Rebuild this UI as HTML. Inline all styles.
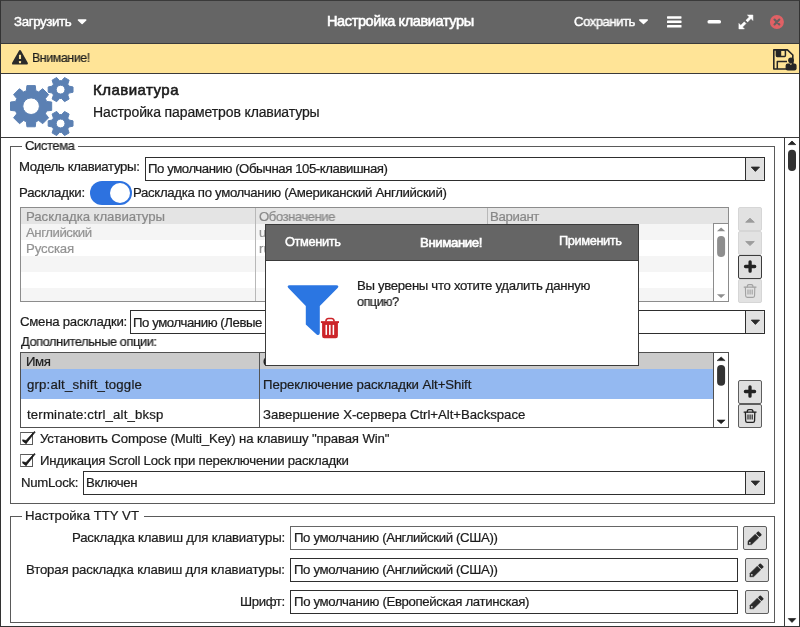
<!DOCTYPE html>
<html><head><meta charset="utf-8">
<style>
*{box-sizing:border-box;margin:0;padding:0}
html,body{width:800px;height:627px;overflow:hidden;background:#fff}
body{font-family:"Liberation Sans",sans-serif;font-size:13px;color:#1c1c1c;position:relative}
.abs{position:absolute}
.t{will-change:transform;position:absolute;white-space:nowrap;line-height:1;transform-origin:0 50%}
.ln{position:absolute;background:#3a3a3a}
.box{position:absolute;border:1px solid #2e2e2e;background:#fff}
.fs{position:absolute;border:1px solid #5a5a5a}
.btn{position:absolute;border:1px solid #5e5e5e;border-radius:2px;background:#dfdfdf}
.btn.dis{border-color:#d6d6d6;background:#e2e2e2}
.dd{position:absolute;border-left:1px solid #2e2e2e;background:#e1e1e1;border-radius:0 2px 2px 0}
svg{position:absolute;overflow:visible}
</style></head><body>

<!-- ===== header ===== -->
<div class="abs" style="left:0;top:0;width:800px;height:43px;background:#656565"></div>
<div class="ln" style="left:0;top:43px;width:800px;height:1px"></div>
<div class="abs" style="left:0;top:44px;width:800px;height:29px;background:#ffe497"></div>
<div class="ln" style="left:0;top:73px;width:800px;height:1px"></div>
<div class="ln" style="left:0;top:137px;width:800px;height:1px"></div>
<div class="t" style="left:14px;top:14.74px;font-size:13.3px;-webkit-text-stroke:0.45px #ffffff;color:#ffffff;letter-spacing:-0.380px;">Загрузить</div>
<div class="t" style="left:327px;top:13.73px;font-size:14.5px;-webkit-text-stroke:0.6px #ffffff;color:#ffffff;letter-spacing:-0.381px;">Настройка клавиатуры</div>
<div class="t" style="left:574.4px;top:14.74px;font-size:13.3px;-webkit-text-stroke:0.45px #ffffff;color:#ffffff;letter-spacing:-0.450px;transform:scaleX(0.9818);">Сохранить</div>
<svg style="left:0;top:0" width="800" height="74" viewBox="0 0 800 74">
  <!-- dropdown arrows -->
  <path d="M78.4 19.9 L85.8 19.9 L82.1 23.6 Z" fill="#fff" stroke="#fff" stroke-width="1.4" stroke-linejoin="round"/>
  <path d="M639.7 19.9 L647.3 19.9 L643.5 23.6 Z" fill="#fff" stroke="#fff" stroke-width="1.4" stroke-linejoin="round"/>
  <!-- hamburger -->
  <g fill="#fff"><rect x="667" y="16.2" width="14.5" height="2.5" rx=".6"/><rect x="667" y="20.6" width="14.5" height="2.5" rx=".6"/><rect x="667" y="25" width="14.5" height="2.5" rx=".6"/></g>
  <!-- minimize -->
  <rect x="707.5" y="20" width="13.5" height="3.6" rx="1.6" fill="#fff"/>
  <!-- maximize -->
  <g fill="#fff" stroke="#fff" stroke-width=".5" stroke-linejoin="round">
    <path d="M747.4 15 L752.9 15 L752.9 20.5 L751 18.6 L747.4 22.2 L745.7 20.5 L749.3 16.9 Z"/>
    <path d="M738.9 28.9 L738.9 23.4 L740.8 25.3 L744.3 21.8 L746 23.5 L742.5 27 L744.4 28.9 Z"/>
  </g>
  <path d="M744.6 20.2 L747.6 23.2" stroke="#656565" stroke-width="1.1"/>
  <!-- close -->
  <circle cx="776.9" cy="22" r="7" fill="#e06165"/>
  <path d="M774.5 19.6 L779.3 24.4 M779.3 19.6 L774.5 24.4" stroke="#646060" stroke-width="2.1" stroke-linecap="round"/>
  <!-- warning triangle -->
  <path d="M20 51.3 L26.7 63.4 L13.2 63.4 Z" fill="#2b2b2b" stroke="#2b2b2b" stroke-width="2.4" stroke-linejoin="round"/>
  <rect x="18.95" y="54.7" width="2.1" height="4.4" rx=".4" fill="#ffe497"/>
  <rect x="18.95" y="61" width="2.1" height="2.2" rx=".4" fill="#ffe497"/>
  <!-- save-as-user icon -->
  <path d="M773.8 49.9 H787.4 L792.8 55 V69 H773.8 Z" fill="none" stroke="#262626" stroke-width="1.6" stroke-linejoin="round"/>
  <rect x="776.4" y="50" width="9" height="6.4" rx=".8" fill="none" stroke="#262626" stroke-width="1.5"/>
  <rect x="776.4" y="50" width="4.8" height="6.4" fill="#262626"/>
  <path d="M777.3 69 V61.4 H787" fill="none" stroke="#262626" stroke-width="1.5" stroke-linejoin="round"/>
  <circle cx="791" cy="60.3" r="2.85" fill="#262626"/>
  <rect x="785.6" y="63.6" width="11" height="6.9" rx="2.2" fill="#262626"/>
  <rect x="790" y="64" width="1.6" height=".8" fill="#c9b47d"/>
</svg>
<svg class="abs" style="left:0;top:0" width="90" height="140" viewBox="0 0 90 140"><g fill="#5b80b3" fill-rule="evenodd" stroke="#5b80b3" stroke-width="1" stroke-linejoin="round"><path d="M46.59 101.46 L51.68 102.01 L51.68 110.39 L46.59 110.94 L45.40 113.81 L48.61 117.79 L42.69 123.71 L38.71 120.50 L35.84 121.69 L35.29 126.78 L26.91 126.78 L26.36 121.69 L23.49 120.50 L19.51 123.71 L13.59 117.79 L16.80 113.81 L15.61 110.94 L10.52 110.39 L10.52 102.01 L15.61 101.46 L16.80 98.59 L13.59 94.61 L19.51 88.69 L23.49 91.90 L26.36 90.71 L26.91 85.62 L35.29 85.62 L35.84 90.71 L38.71 91.90 L42.69 88.69 L48.61 94.61 L45.40 98.59 Z M22.80 106.20 a8.30 8.30 0 1 0 16.60 0 a8.30 8.30 0 1 0 -16.60 0 Z"/><path d="M68.88 86.08 L73.02 86.96 L73.02 92.24 L68.88 93.12 L67.79 95.02 L69.10 99.04 L64.52 101.68 L61.70 98.53 L59.50 98.53 L56.68 101.68 L52.10 99.04 L53.41 95.02 L52.32 93.12 L48.18 92.24 L48.18 86.96 L52.32 86.08 L53.41 84.18 L52.10 80.16 L56.68 77.52 L59.50 80.67 L61.70 80.67 L64.52 77.52 L69.10 80.16 L67.79 84.18 Z M56.20 89.60 a4.40 4.40 0 1 0 8.80 0 a4.40 4.40 0 1 0 -8.80 0 Z"/><path d="M68.88 119.98 L73.02 120.86 L73.02 126.14 L68.88 127.02 L67.79 128.92 L69.10 132.94 L64.52 135.58 L61.70 132.43 L59.50 132.43 L56.68 135.58 L52.10 132.94 L53.41 128.92 L52.32 127.02 L48.18 126.14 L48.18 120.86 L52.32 119.98 L53.41 118.08 L52.10 114.06 L56.68 111.42 L59.50 114.57 L61.70 114.57 L64.52 111.42 L69.10 114.06 L67.79 118.08 Z M56.20 123.50 a4.40 4.40 0 1 0 8.80 0 a4.40 4.40 0 1 0 -8.80 0 Z"/></g></svg>

<!-- ===== main scroll ===== -->
<div class="ln" style="left:784px;top:138px;width:1px;height:489px"></div>
<svg style="left:785px;top:138px" width="14" height="489" viewBox="785 138 14 489">
  <path d="M788.3 144.6 L795.7 144.6 L792 141 Z" fill="#222" stroke="#222" stroke-width=".8" stroke-linejoin="round"/>
  <rect x="788" y="149.8" width="8" height="21.2" rx="4" fill="#333"/>
  <path d="M788.3 618.6 L795.7 618.6 L792 622.4 Z" fill="#222" stroke="#222" stroke-width=".8" stroke-linejoin="round"/>
</svg>

<!-- ===== fieldset 1 ===== -->
<div class="fs" style="left:10px;top:146px;width:765px;height:358px"></div>
<!-- select 1 -->
<div class="box" style="left:145px;top:157px;width:620px;height:24px"></div>
<div class="dd" style="left:745px;top:158px;width:19px;height:22px"></div>
<!-- toggle -->
<div class="abs" style="left:90px;top:181px;width:42px;height:24px;border-radius:12px;background:#2d72e0"></div>
<div class="abs" style="left:109.8px;top:183px;width:20.4px;height:20.4px;border-radius:10.2px;background:#fff"></div>
<!-- table 1 -->
<div class="abs" style="left:20px;top:207px;width:709px;height:95px;border:1px solid #8c8c8c;background:#fff"></div>
<div class="abs" style="left:21px;top:208px;width:707px;height:16px;background:#e4e4e4"></div>
<div class="abs" style="left:21px;top:224px;width:692px;height:16px;background:#f5f5f5"></div>
<div class="abs" style="left:21px;top:256px;width:692px;height:16px;background:#f5f5f5"></div>
<div class="abs" style="left:21px;top:288px;width:692px;height:13px;background:#f5f5f5"></div>
<div class="abs" style="left:255px;top:208px;width:1px;height:93px;background:#b8b8b8"></div>
<div class="abs" style="left:487px;top:208px;width:1px;height:93px;background:#b8b8b8"></div>
<div class="abs" style="left:713px;top:223px;width:15px;height:78px;background:#fff;border-left:1px solid #8c8c8c;border-top:1px solid #8c8c8c"></div>
<svg style="left:713px;top:223px" width="16" height="79" viewBox="713 223 16 79">
  <path d="M716.9 231.2 L725.3 231.2 L721.1 227.4 Z" fill="#8e8e8e"/>
  <rect x="717.1" y="236" width="8" height="21" rx="4" fill="#8e8e8e"/>
  <path d="M716.9 294.2 L725.3 294.2 L721.1 298 Z" fill="#8e8e8e"/>
</svg>
<!-- side buttons 1 -->
<div class="btn dis" style="left:738px;top:207px;width:24px;height:24px"></div>
<div class="btn dis" style="left:738px;top:231px;width:24px;height:24px"></div>
<div class="btn" style="left:738px;top:255px;width:24px;height:24px;border-color:#3c3c3c"></div>
<div class="btn dis" style="left:738px;top:279px;width:24px;height:24px"></div>
<!-- select 2 -->
<div class="box" style="left:130px;top:310px;width:635px;height:24px"></div>
<div class="dd" style="left:745px;top:311px;width:19px;height:22px"></div>
<!-- table 2 -->
<div class="abs" style="left:20px;top:352px;width:709px;height:76px;border:1px solid #505050;background:#fff"></div>
<div class="abs" style="left:21px;top:353px;width:692px;height:16px;background:#cbcbcb"></div>
<div class="abs" style="left:21px;top:369px;width:692px;height:30px;background:#94b9f1"></div>
<div class="abs" style="left:259px;top:353px;width:1px;height:74px;background:#555"></div>
<div class="abs" style="left:713px;top:353px;width:1px;height:74px;background:#505050"></div>
<svg style="left:713px;top:352px" width="16" height="76" viewBox="713 352 16 76">
  <path d="M717.1 360.6 L725.1 360.6 L721.1 356.9 Z" fill="#222" stroke="#222" stroke-width=".6" stroke-linejoin="round"/>
  <rect x="717.1" y="365" width="8" height="20.8" rx="4" fill="#333"/>
  <path d="M717.1 420 L725.1 420 L721.1 423.7 Z" fill="#222" stroke="#222" stroke-width=".6" stroke-linejoin="round"/>
</svg>
<!-- side buttons 2 -->
<div class="btn" style="left:738px;top:380px;width:24px;height:24px"></div>
<div class="btn" style="left:738px;top:404px;width:24px;height:24px"></div>
<!-- checkboxes -->
<div class="abs" style="left:20px;top:432px;width:13px;height:13px;border:1px solid #5a5a5a;border-left-color:#808080;background:#fff"></div>
<div class="abs" style="left:20px;top:454px;width:13px;height:13px;border:1px solid #5a5a5a;border-left-color:#808080;background:#fff"></div>
<!-- select 3 -->
<div class="box" style="left:83px;top:471px;width:682px;height:24px"></div>
<div class="dd" style="left:745px;top:472px;width:19px;height:22px"></div>

<!-- ===== fieldset 2 ===== -->
<div class="fs" style="left:10px;top:516px;width:765px;height:107px"></div>
<div class="box" style="left:290px;top:526px;width:448px;height:24px;border-color:#666"></div>
<div class="box" style="left:290px;top:558px;width:448px;height:24px"></div>
<div class="box" style="left:290px;top:590px;width:448px;height:24px"></div>
<div class="btn" style="left:743px;top:526px;width:24px;height:24px"></div>
<div class="btn" style="left:745px;top:558px;width:24px;height:24px"></div>
<div class="btn" style="left:745px;top:590px;width:24px;height:24px"></div>

<!-- icons in body -->
<svg style="left:0;top:0" width="800" height="627" viewBox="0 0 800 627">
<path d="M751.30 167.10 L759.50 167.10 L755.40 171.40 Z" fill="#2a2a2a" stroke="#2a2a2a" stroke-width=".9" stroke-linejoin="round"/><path d="M751.30 320.10 L759.50 320.10 L755.40 324.40 Z" fill="#2a2a2a" stroke="#2a2a2a" stroke-width=".9" stroke-linejoin="round"/><path d="M751.30 481.10 L759.50 481.10 L755.40 485.40 Z" fill="#2a2a2a" stroke="#2a2a2a" stroke-width=".9" stroke-linejoin="round"/><path d="M745.70 222.20 L754.30 222.20 L750.00 218.20 Z" fill="#9c9c9c" stroke="#9c9c9c" stroke-width=".9" stroke-linejoin="round"/><path d="M745.70 241.50 L754.30 241.50 L750.00 245.50 Z" fill="#9c9c9c" stroke="#9c9c9c" stroke-width=".9" stroke-linejoin="round"/><path d="M745.50 266.50 H754.70 M750.10 261.80 V271.20" stroke="#222" stroke-width="3.3" stroke-linecap="round" fill="none"/><g fill="none" stroke="#a2a2a2" stroke-width="1.1" stroke-linecap="round" stroke-linejoin="round"><path d="M744.10 287.10 H756.10"/><path d="M747.20 287.10 Q747.20 284.60 748.80 284.60 H751.40 Q753.00 284.60 753.00 287.10"/><path d="M745.40 287.30 L745.65 295.80 Q745.70 297.40 747.20 297.40 H753.00 Q754.50 297.40 754.55 295.80 L754.80 287.30"/></g><g stroke="#a2a2a2" stroke-width="1.15" stroke-linecap="butt"><path d="M748.00 289.60 V294.60"/><path d="M750.10 289.60 V294.60"/><path d="M752.20 289.60 V294.60"/></g><path d="M745.40 391.50 H754.60 M750.00 386.80 V396.20" stroke="#222" stroke-width="3.3" stroke-linecap="round" fill="none"/><g fill="none" stroke="#222" stroke-width="1.3" stroke-linecap="round" stroke-linejoin="round"><path d="M744.10 412.10 H756.10"/><path d="M747.20 412.10 Q747.20 409.60 748.80 409.60 H751.40 Q753.00 409.60 753.00 412.10"/><path d="M745.40 412.30 L745.65 420.80 Q745.70 422.40 747.20 422.40 H753.00 Q754.50 422.40 754.55 420.80 L754.80 412.30"/></g><g stroke="#222" stroke-width="1.15" stroke-linecap="butt"><path d="M748.00 414.60 V419.60"/><path d="M750.10 414.60 V419.60"/><path d="M752.20 414.60 V419.60"/></g><g transform="translate(747.90 544.70) rotate(-44)"><path d="M0 0 L2.7 -2.5 L12.6 -2.5 L12.6 2.5 L2.7 2.5 Z" fill="#2a2a2a" stroke="#2a2a2a" stroke-width=".5" stroke-linejoin="round"/><rect x="13.6" y="-2.6" width="3.4" height="5.2" rx=".9" fill="#2a2a2a"/><circle cx="2.7" cy="0" r=".85" fill="#e1e1e1"/></g><g transform="translate(749.90 576.80) rotate(-44)"><path d="M0 0 L2.7 -2.5 L12.6 -2.5 L12.6 2.5 L2.7 2.5 Z" fill="#2a2a2a" stroke="#2a2a2a" stroke-width=".5" stroke-linejoin="round"/><rect x="13.6" y="-2.6" width="3.4" height="5.2" rx=".9" fill="#2a2a2a"/><circle cx="2.7" cy="0" r=".85" fill="#e1e1e1"/></g><g transform="translate(749.90 608.80) rotate(-44)"><path d="M0 0 L2.7 -2.5 L12.6 -2.5 L12.6 2.5 L2.7 2.5 Z" fill="#2a2a2a" stroke="#2a2a2a" stroke-width=".5" stroke-linejoin="round"/><rect x="13.6" y="-2.6" width="3.4" height="5.2" rx=".9" fill="#2a2a2a"/><circle cx="2.7" cy="0" r=".85" fill="#e1e1e1"/></g><path d="M22.60 439.90 L26.20 443.40 L35.20 432.10 L34.20 431.60 L26.00 440.50 Z" fill="#1a1a1a" stroke="#1a1a1a" stroke-width=".7" stroke-linejoin="round"/><path d="M23.30 440.70 L26.00 442.70" stroke="#1a1a1a" stroke-width="2" stroke-linecap="round"/><path d="M22.60 461.90 L26.20 465.40 L35.20 454.10 L34.20 453.60 L26.00 462.50 Z" fill="#1a1a1a" stroke="#1a1a1a" stroke-width=".7" stroke-linejoin="round"/><path d="M23.30 462.70 L26.00 464.70" stroke="#1a1a1a" stroke-width="2" stroke-linecap="round"/>
</svg>

<div class="t" style="left:31.6px;top:50.69px;font-size:13.6px;-webkit-text-stroke:0.22px #1c1c1c;letter-spacing:-0.450px;transform:scaleX(0.9107);">Внимание!</div>
<div class="t" style="left:92.5px;top:81.7px;font-size:15px;-webkit-text-stroke:0.6px #1c1c1c;letter-spacing:0.475px;">Клавиатура</div>
<div class="t" style="left:92.5px;top:105.15px;font-size:14px;-webkit-text-stroke:0.22px #1c1c1c;letter-spacing:-0.121px;">Настройка параметров клавиатуры</div>
<div class="t" style="left:25px;top:138.83px;font-size:13.2px;-webkit-text-stroke:0.22px #1c1c1c;letter-spacing:-0.450px;transform:scaleX(0.9905);background:#fff;padding:0 4.5px 0 3px;margin-left:-3px;">Система</div>
<div class="t" style="left:19px;top:159.83px;font-size:13.2px;-webkit-text-stroke:0.22px #1c1c1c;letter-spacing:-0.332px;">Модель клавиатуры:</div>
<div class="t" style="left:148px;top:161.83px;font-size:13.2px;-webkit-text-stroke:0.22px #1c1c1c;letter-spacing:-0.438px;">По умолчанию (Обычная 105-клавишная)</div>
<div class="t" style="left:19px;top:185.83px;font-size:13.2px;-webkit-text-stroke:0.22px #1c1c1c;letter-spacing:-0.173px;">Раскладки:</div>
<div class="t" style="left:133px;top:185.83px;font-size:13.2px;-webkit-text-stroke:0.22px #1c1c1c;letter-spacing:-0.317px;">Раскладка по умолчанию (Американский Английский)</div>
<div class="t" style="left:26px;top:210.33px;font-size:13.2px;-webkit-text-stroke:0.22px #888888;color:#888888;letter-spacing:-0.040px;">Раскладка клавиатуры</div>
<div class="t" style="left:258.5px;top:210.33px;font-size:13.2px;-webkit-text-stroke:0.22px #888888;color:#888888;letter-spacing:-0.450px;transform:scaleX(0.9920);">Обозначение</div>
<div class="t" style="left:490px;top:210.33px;font-size:13.2px;-webkit-text-stroke:0.22px #888888;color:#888888;letter-spacing:-0.357px;">Вариант</div>
<div class="t" style="left:26px;top:226.03px;font-size:13.2px;-webkit-text-stroke:0.22px #939393;color:#939393;letter-spacing:-0.450px;">Английский</div>
<div class="t" style="left:26px;top:241.83px;font-size:13.2px;-webkit-text-stroke:0.22px #939393;color:#939393;letter-spacing:-0.138px;">Русская</div>
<div class="t" style="left:258.5px;top:226.03px;font-size:13.2px;-webkit-text-stroke:0.22px #939393;color:#939393;">us</div>
<div class="t" style="left:258.5px;top:241.83px;font-size:13.2px;-webkit-text-stroke:0.22px #939393;color:#939393;">ru</div>
<div class="t" style="left:20px;top:314.58px;font-size:13.2px;-webkit-text-stroke:0.22px #1c1c1c;letter-spacing:-0.245px;">Смена раскладки:</div>
<div class="t" style="left:133px;top:315.83px;font-size:13.2px;-webkit-text-stroke:0.22px #1c1c1c;letter-spacing:-0.424px;">По умолчанию (Левые</div>
<div class="t" style="left:20.5px;top:335.33px;font-size:13.2px;-webkit-text-stroke:0.22px #1c1c1c;letter-spacing:-0.450px;transform:scaleX(0.9746);">Дополнительные опции:</div>
<div class="t" style="left:26px;top:354.83px;font-size:13.2px;-webkit-text-stroke:0.22px #1c1c1c;letter-spacing:-0.450px;transform:scaleX(0.9861);">Имя</div>
<div class="t" style="left:262.5px;top:354.83px;font-size:13.2px;-webkit-text-stroke:0.22px #1c1c1c;">Описание</div>
<div class="t" style="left:26.5px;top:377.83px;font-size:13.2px;-webkit-text-stroke:0.22px #1c1c1c;letter-spacing:0.178px;">grp:alt_shift_toggle</div>
<div class="t" style="left:26.5px;top:407.83px;font-size:13.2px;-webkit-text-stroke:0.22px #1c1c1c;letter-spacing:0.166px;">terminate:ctrl_alt_bksp</div>
<div class="t" style="left:262.7px;top:377.83px;font-size:13.2px;-webkit-text-stroke:0.22px #1c1c1c;letter-spacing:-0.076px;">Переключение раскладки Alt+Shift</div>
<div class="t" style="left:262.7px;top:407.83px;font-size:13.2px;-webkit-text-stroke:0.22px #1c1c1c;letter-spacing:-0.022px;">Завершение X-сервера Ctrl+Alt+Backspace</div>
<div class="t" style="left:39.75px;top:431.83px;font-size:13.2px;-webkit-text-stroke:0.22px #1c1c1c;letter-spacing:-0.137px;">Установить Compose (Multi_Key) на клавишу &quot;правая Win&quot;</div>
<div class="t" style="left:39.75px;top:453.83px;font-size:13.2px;-webkit-text-stroke:0.22px #1c1c1c;letter-spacing:-0.234px;">Индикация Scroll Lock при переключении раскладки</div>
<div class="t" style="left:21px;top:475.83px;font-size:13.2px;-webkit-text-stroke:0.22px #1c1c1c;letter-spacing:-0.266px;">NumLock:</div>
<div class="t" style="left:85.75px;top:475.83px;font-size:13.2px;-webkit-text-stroke:0.22px #1c1c1c;letter-spacing:-0.321px;">Включен</div>
<div class="t" style="left:25px;top:508.83px;font-size:13.2px;-webkit-text-stroke:0.22px #1c1c1c;letter-spacing:0.014px;background:#fff;padding:0 4.5px 0 3px;margin-left:-3px;">Настройка TTY VT</div>
<div class="t" style="left:71.5px;top:530.83px;font-size:13.2px;-webkit-text-stroke:0.22px #1c1c1c;letter-spacing:-0.194px;">Раскладка клавиш для клавиатуры:</div>
<div class="t" style="left:294px;top:530.83px;font-size:13.2px;-webkit-text-stroke:0.22px #1c1c1c;letter-spacing:-0.358px;">По умолчанию (Английский (США))</div>
<div class="t" style="left:25.75px;top:562.83px;font-size:13.2px;-webkit-text-stroke:0.22px #1c1c1c;letter-spacing:-0.167px;">Вторая раскладка клавиш для клавиатуры:</div>
<div class="t" style="left:294px;top:562.83px;font-size:13.2px;-webkit-text-stroke:0.22px #1c1c1c;letter-spacing:-0.358px;">По умолчанию (Английский (США))</div>
<div class="t" style="left:239.75px;top:594.83px;font-size:13.2px;-webkit-text-stroke:0.22px #1c1c1c;letter-spacing:-0.385px;">Шрифт:</div>
<div class="t" style="left:294px;top:594.83px;font-size:13.2px;-webkit-text-stroke:0.22px #1c1c1c;letter-spacing:-0.342px;">По умолчанию (Европейская латинская)</div>

<!-- ===== modal ===== -->
<div class="abs" style="left:265px;top:224px;width:374px;height:142px;background:#fff;border:1px solid #3a3a3a"></div>
<div class="abs" style="left:266px;top:225px;width:372px;height:35px;background:#656565"></div>
<div class="ln" style="left:266px;top:260px;width:372px;height:1px"></div>
<svg style="left:0;top:0" width="800" height="627" viewBox="0 0 800 627">
<path d="M289.6 285.2 L336.4 285.2 Q339.6 285.6 337.6 288 L319.8 306 L319.8 333 Q319.4 336 316.6 334.4 L305.8 324.4 L305.8 306 L288.4 288 Q286.4 285.6 289.6 285.2 Z" fill="#2b76e2"/><path d="M320.9 322.1 H339" stroke="#cc2429" stroke-width="1.9" fill="none"/><path d="M325.8 321.6 Q326 318.6 328.4 318.6 H331.6 Q334 318.6 334.2 321.6" stroke="#cc2429" stroke-width="1.5" fill="none"/><path d="M322.1 322.4 H337.9 V336 Q337.9 338.2 335.7 338.2 H324.3 Q322.1 338.2 322.1 336 Z" fill="#cc2429"/><rect x="325.50" y="324.9" width="1.55" height="10" fill="#fff"/><rect x="329.05" y="324.9" width="1.55" height="10" fill="#fff"/><rect x="332.60" y="324.9" width="1.55" height="10" fill="#fff"/>
</svg>
<div class="t" style="left:284.5px;top:236.46px;font-size:12.8px;-webkit-text-stroke:0.45px #ffffff;color:#ffffff;letter-spacing:-0.373px;">Отменить</div>
<div class="t" style="left:420.3px;top:235.83px;font-size:13.2px;-webkit-text-stroke:0.65px #ffffff;color:#ffffff;letter-spacing:-0.389px;">Внимание!</div>
<div class="t" style="left:559px;top:235.16px;font-size:12.8px;-webkit-text-stroke:0.45px #ffffff;color:#ffffff;letter-spacing:-0.392px;">Применить</div>
<div class="t" style="left:357px;top:278.83px;font-size:13.2px;-webkit-text-stroke:0.22px #1c1c1c;letter-spacing:-0.313px;">Вы уверены что хотите удалить данную</div>
<div class="t" style="left:357px;top:294.83px;font-size:13.2px;-webkit-text-stroke:0.22px #1c1c1c;letter-spacing:-0.450px;transform:scaleX(0.9505);">опцию?</div>

<!-- window border -->
<div class="abs" style="left:0;top:0;width:800px;height:627px;border:1px solid #333;border-top-color:#3a3a3a"></div>
</body></html>
